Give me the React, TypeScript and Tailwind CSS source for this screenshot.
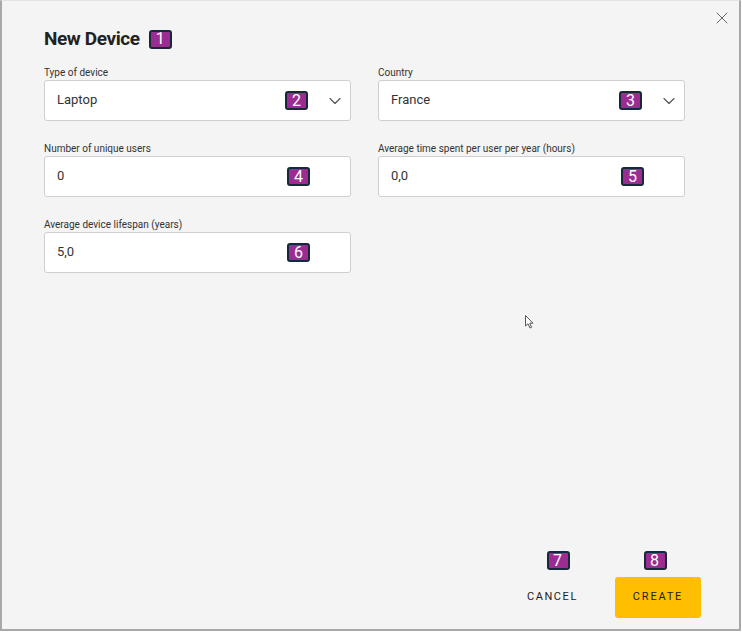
import { ChevronDown, X } from "lucide-react"

const Badge = ({ n }: { n: number }) => (
  <span className="inline-flex items-center justify-center w-[23px] h-[19px] rounded-[3px] border-2 border-[#17283a] bg-[#9b2c92] text-white text-[16px] leading-none">
    {n}
  </span>
)

interface FieldProps {
  label: string
  value: string
  badge: number
  select?: boolean
}

const Field = ({ label, value, badge, select }: FieldProps) => (
  <div className="flex flex-col">
    <label className="h-[14px] text-[10px] leading-[14px] text-[#333]">{label}</label>
    <div className="h-[41px] flex items-center bg-white border border-[#cfcfcf] rounded-[3px] pl-[12px] pr-[5px]">
      <span className="flex-1 text-[13px] leading-[16px] text-[#333] -mt-[2px]">{value}</span>
      <span className={select ? "mr-[17px]" : "mr-[35px]"}>
        <Badge n={badge} />
      </span>
      {select && <ChevronDown className="w-[20px] h-[20px] text-[#555]" strokeWidth={1.4} />}
    </div>
  </div>
)

export default function App() {
  return (
    <div className="w-[742px] h-[632px] bg-white" style={{ fontFamily: "Roboto, 'Noto Sans', sans-serif" }}>
      <div className="relative w-[741px] h-[631px] bg-[#f4f4f4] border-l-2 border-r-2 border-b-2 border-t border-l-[#a8a8a8] border-r-[#a8a8a8] border-b-[#a8a8a8] border-t-[#e4e4e4] flex flex-col">
        <button className="absolute right-[7px] top-[7px] text-[#666]">
          <X className="w-[20px] h-[20px]" strokeWidth={1.2} />
        </button>

        <div className="pl-[42px] pr-[54px] pt-[26px]">
          <div className="flex items-center gap-[9px] h-[24px]">
            <h2 className="text-[19px] font-bold text-[#222] tracking-[-0.4px]">New Device</h2>
            <Badge n={1} />
          </div>

          <div className="grid grid-cols-2 gap-x-[27px] gap-y-[21px] mt-[15px]">
            <Field label="Type of device" value="Laptop" badge={2} select />
            <Field label="Country" value="France" badge={3} select />
            <Field label="Number of unique users" value="0" badge={4} />
            <Field label="Average time spent per user per year (hours)" value="0,0" badge={5} />
            <Field label="Average device lifespan (years)" value="5,0" badge={6} />
          </div>
        </div>

        <div className="flex-1" />

        <div className="flex justify-end items-center gap-[17px] pr-[38px] pb-[11px]">
          <button className="relative h-[41px] px-[20px] text-[11px] tracking-[1.6px] text-[#222]">
            CANCEL
            <span className="absolute left-[40px] -top-[26px]">
              <Badge n={7} />
            </span>
          </button>
          <button className="relative h-[41px] w-[86px] rounded-[3px] bg-[#ffbf00] text-[11px] tracking-[1.8px] text-[#222]">
            CREATE
            <span className="absolute left-[29px] -top-[26px]">
              <Badge n={8} />
            </span>
          </button>
        </div>

        <svg className="absolute left-[522px] top-[313px]" width="12" height="16" viewBox="0 0 12 16">
          <path d="M1.5 1.5 L1.5 12 L4 9.8 L6 14 L7.6 13.3 L5.7 9.2 L9 9.2 Z" fill="white" stroke="#555" strokeWidth="1" strokeLinejoin="round" />
        </svg>
      </div>
    </div>
  )
}
